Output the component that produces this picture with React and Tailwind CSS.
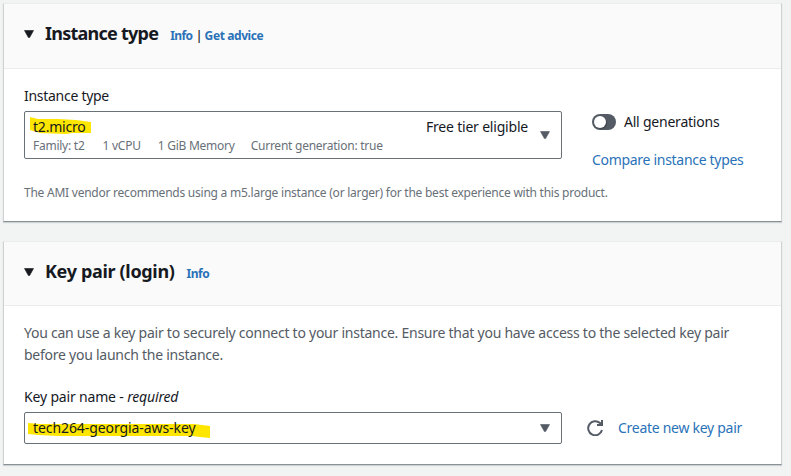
import React from "react";

function Caret({ className }) {
  return (
    <svg viewBox="0 0 10 8" className={`h-2 w-2.5 shrink-0 ${className}`} fill="currentColor">
      <path d="M0.5 0.5h9L5.6 7.6h-1.2z" stroke="currentColor" strokeWidth="0.6" strokeLinejoin="round" />
    </svg>
  );
}

function Card({ title, titleClass, headerClass, links, className, children }) {
  return (
    <section className={`w-[779px] border border-t-[#eaeded] border-r-[#cdd1d1] border-b-[#879196] border-l-[#cdd1d1] bg-white shadow-[0_1px_1px_rgba(0,28,36,0.15)] ${className}`}>
      <header className={`flex items-center border-b border-[#eaeded] bg-[#fafafa] pl-5 ${headerClass}`}>
        <Caret className="text-[#16191f]" />
        <h2 className={`mb-0.5 ml-[11px] text-lg leading-6 font-bold text-[#16191f] ${titleClass}`}>{title}</h2>
        {links}
      </header>
      {children}
    </section>
  );
}

export default function App() {
  return (
    <main className="h-[476px] w-[791px] overflow-hidden bg-[#f2f3f3] pt-[3px] pl-[3px] font-['Noto_Sans',sans-serif] text-sm whitespace-nowrap text-[#16191f]">
      <Card
        title="Instance type"
        titleClass="tracking-[-0.75px]"
        headerClass="h-[65px] pb-1"
        className="h-[219px]"
        links={
          <div className="mt-1 ml-3 flex items-center text-xs font-bold text-[#2a72b8]">
            <a className="tracking-[-0.6px]">Info</a>
            <span className="mr-0.5 ml-[3px] text-[13px] font-medium text-[#16191f]">|</span>
            <a className="tracking-[-0.4px]">Get advice</a>
          </div>
        }
      >
        <div className="flex px-5 pt-4">
          <div className="w-[538px]">
            <label className="block h-[22px] leading-[22px] tracking-[-0.28px]">Instance type</label>
            <div className="mt-1 flex h-12 items-center justify-between rounded-[2px] border border-[#687078] pr-[11px] pl-2">
              <div>
                <div className="relative isolate h-5 leading-5 tracking-[-0.2px]">
                  <svg viewBox="0 0 62 18" className="absolute top-0 -left-[3px] -z-10 h-[18px] w-[62px]" fill="#ffe600">
                    <path d="M0 0l8 2 20 0 18 1 15 2v11H42l-6 1-26-1-10-3z" />
                  </svg>
                  t2.micro
                </div>
                <div className="flex h-4 gap-[17px] text-xs leading-[18px] tracking-[-0.25px] text-[#687078]">
                  <span className="mr-px">Family: t2</span>
                  <span>1 vCPU</span>
                  <span>1 GiB Memory</span>
                  <span className="-ml-px">Current generation: true</span>
                </div>
              </div>
              <div className="flex items-center gap-3">
                <span className="mb-4 h-5 leading-5 tracking-[-0.2px]">Free tier eligible</span>
                <Caret className="text-[#545b64]" />
              </div>
            </div>
          </div>
          <div className="ml-[30px] pt-[26px]">
            <div className="flex h-[22px] items-center gap-2">
              <span className="flex h-4 w-6 items-center rounded-full bg-[#545b64] pl-[2px]">
                <span className="h-3 w-3 rounded-full bg-white shadow-[1px_1px_1px_rgba(0,0,0,0.25)]" />
              </span>
              <span className="tracking-[-0.22px]">All generations</span>
            </div>
            <a className="mt-4 block leading-[22px] tracking-[-0.3px] text-[#2a72b8]">Compare instance types</a>
          </div>
        </div>
        <p className="mt-[11px] ml-5 text-xs leading-[22px] tracking-[-0.24px] text-[#687078]">
          The AMI vendor recommends using a m5.large instance (or larger) for the best experience with this product.
        </p>
      </Card>

      <Card
        title="Key pair (login)"
        titleClass="tracking-[-0.33px]"
        headerClass="h-16 pb-1"
        className="mt-[19px] h-[224px]"
        links={<a className="mt-1 ml-3 text-xs font-bold tracking-[-0.5px] text-[#2a72b8]">Info</a>}
      >
        <div className="px-5 pt-4">
          <p className="leading-[22px] tracking-[-0.25px] text-[#545b64]">
            You can use a key pair to securely connect to your instance. Ensure that you have access to the selected key pair
            <br />
            before you launch the instance.
          </p>
          <label className="mt-5 block leading-[22px] tracking-[-0.17px]">
            Key pair name - <i>required</i>
          </label>
          <div className="mt-1 flex items-center">
            <div className="flex h-8 w-[538px] items-center justify-between rounded-[2px] border border-[#687078] pr-[11px] pl-2">
              <span className="relative isolate leading-5 tracking-[-0.08px]">
                <svg viewBox="0 0 182 15" className="absolute top-[5px] -left-[5px] -z-10 h-[15px] w-[182px]" fill="#ffe600">
                  <path d="M0 0l12 1h154l8 1 8 1v12l-10-1-8-1H30l-20-1-10-1z" />
                </svg>
                tech264-georgia-aws-key
              </span>
              <Caret className="text-[#545b64]" />
            </div>
            <svg viewBox="0 0 16 16" className="ml-[25px] h-4 w-4" fill="none" stroke="#545b64" strokeWidth="2">
              <path d="M15 10A7 7 0 1 1 13 3.1L15 5" />
              <path d="M15 0v5h-5" />
            </svg>
            <a className="ml-[15px] tracking-[-0.28px] text-[#2a72b8]">Create new key pair</a>
          </div>
        </div>
      </Card>
    </main>
  );
}
